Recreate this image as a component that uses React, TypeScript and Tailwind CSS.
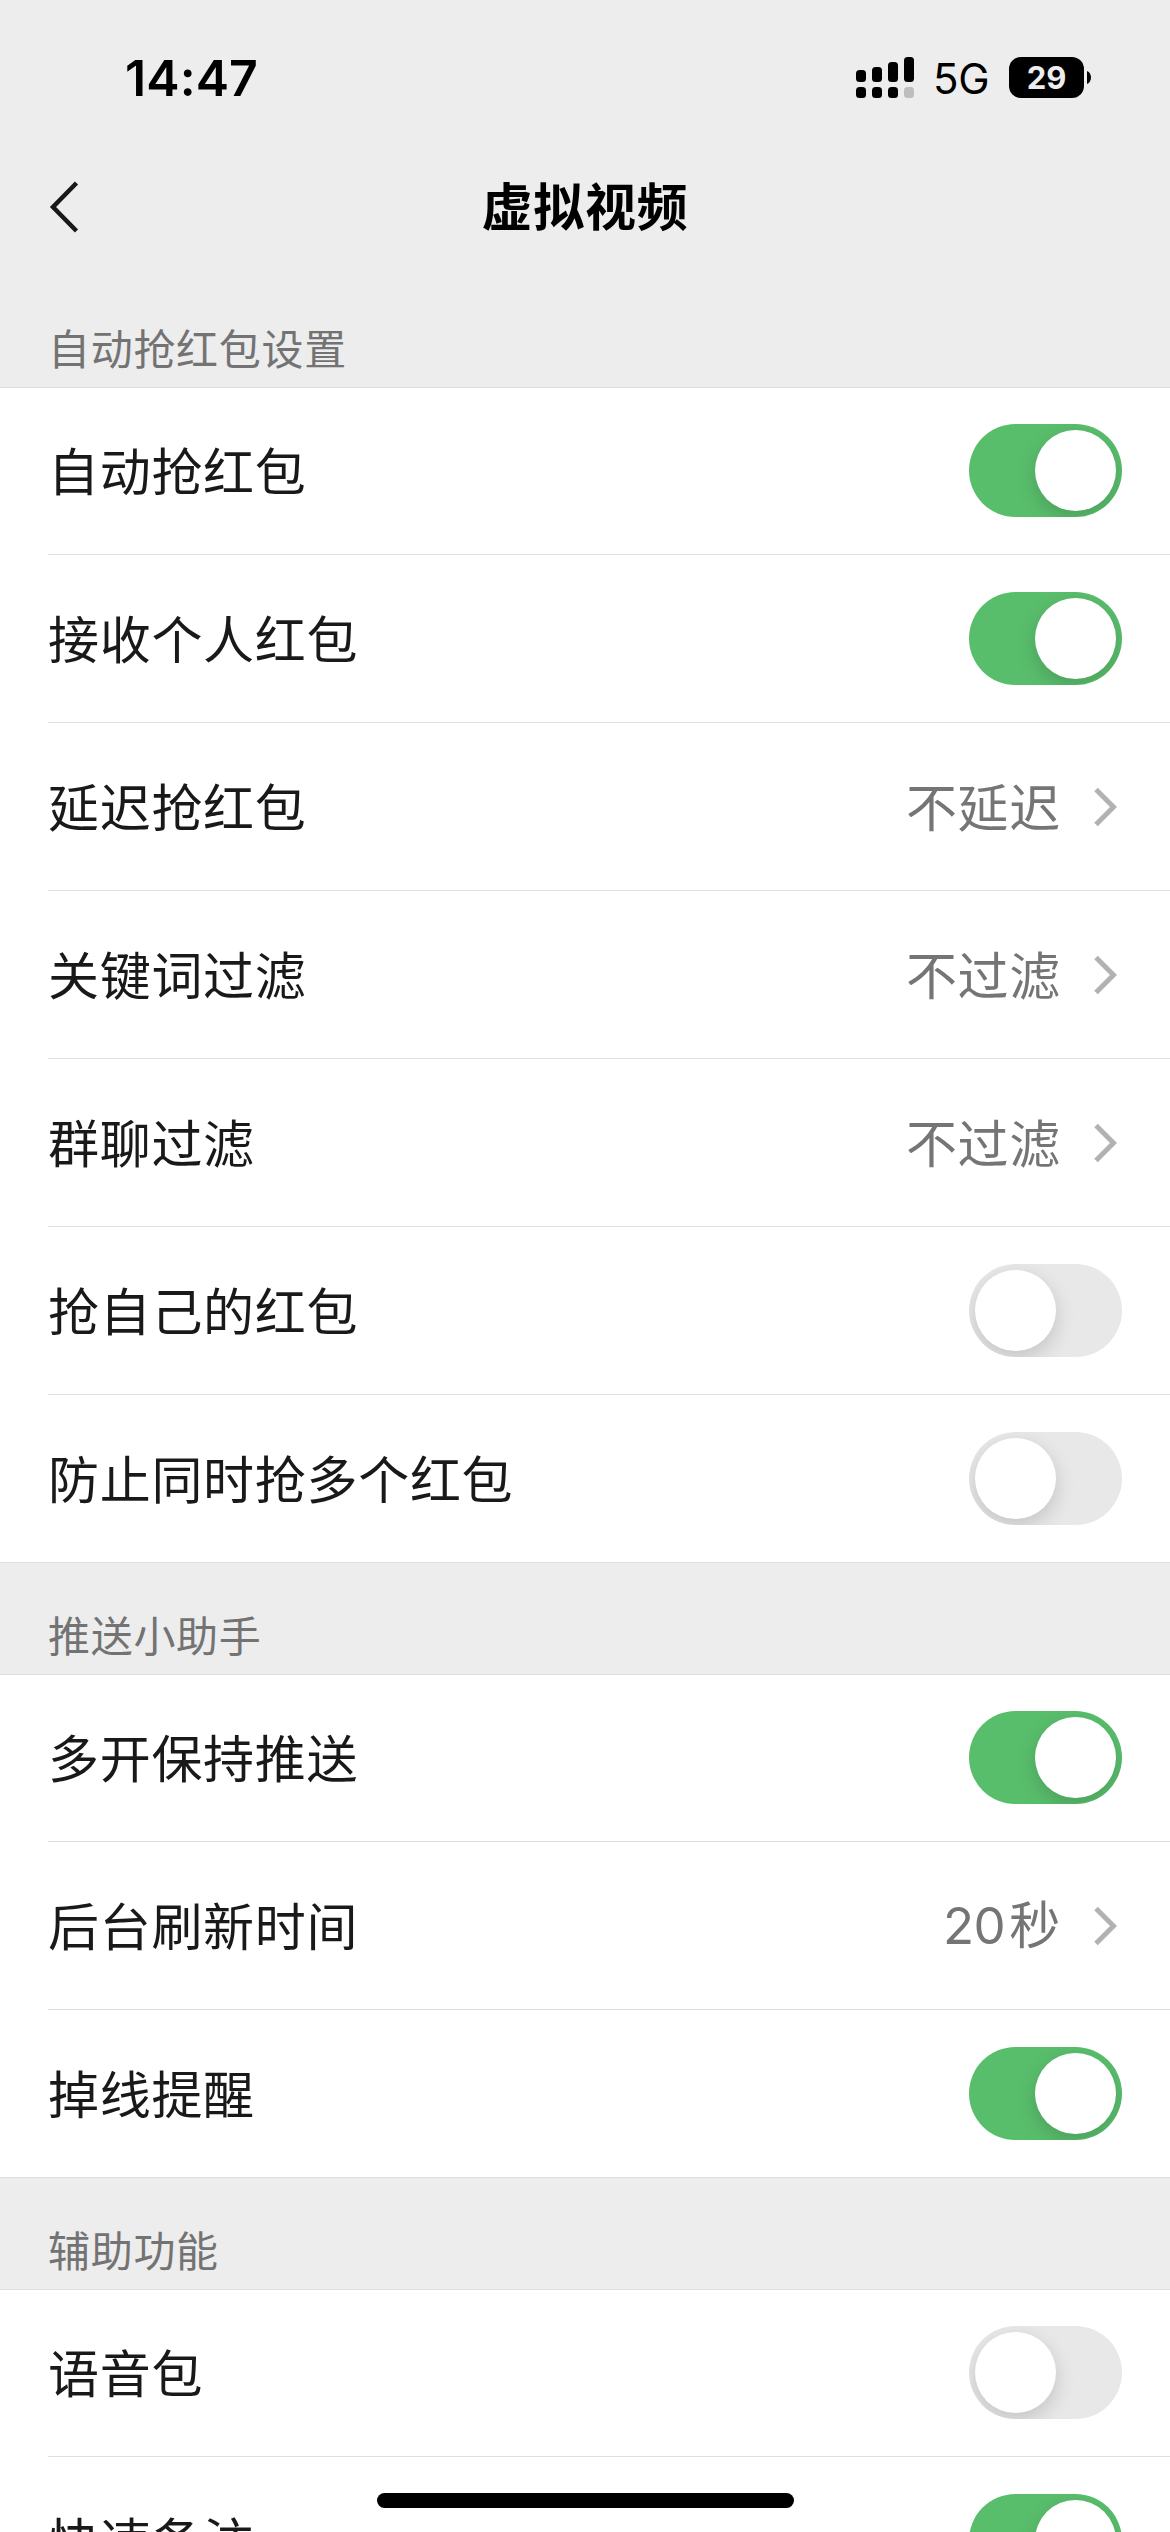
import clsx from "clsx";
import { useState } from "react";

type SettingItem = {
	label: string;
	amount?: number;
	value?: string;
	enabled?: boolean;
};

type SettingSection = {
	title: string;
	items: SettingItem[];
};

const SECTIONS: SettingSection[] = [
	{
		title: "自动抢红包设置",
		items: [
			{ label: "自动抢红包", enabled: true },
			{ label: "接收个人红包", enabled: true },
			{ label: "延迟抢红包", value: "不延迟" },
			{ label: "关键词过滤", value: "不过滤" },
			{ label: "群聊过滤", value: "不过滤" },
			{ label: "抢自己的红包", enabled: false },
			{ label: "防止同时抢多个红包", enabled: false },
		],
	},
	{
		title: "推送小助手",
		items: [
			{ label: "多开保持推送", enabled: true },
			{ label: "后台刷新时间", amount: 20, value: "秒" },
			{ label: "掉线提醒", enabled: true },
		],
	},
	{
		title: "辅助功能",
		items: [
			{ label: "语音包", enabled: false },
			{ label: "快速备注", enabled: true },
		],
	},
];

function SignalIcon() {
	return (
		<svg width="58" height="41" viewBox="0 0 58 41" fill="#000">
			<rect x="0" y="13" width="10" height="12" rx="3.5" />
			<rect x="16" y="10" width="10" height="15" rx="3.5" />
			<rect x="32" y="5" width="10" height="20" rx="3.5" />
			<rect x="48" y="0" width="10" height="25" rx="3.5" />
			<rect x="0" y="30" width="10" height="11" rx="3.5" />
			<rect x="16" y="30" width="10" height="11" rx="3.5" />
			<rect x="32" y="30" width="10" height="11" rx="3.5" />
			<rect x="48" y="30" width="10" height="11" rx="3.5" fill="#bdbdbd" />
		</svg>
	);
}

function StatusBar() {
	return (
		<div className="flex h-[155px] items-center justify-between pl-[125px] pr-[79px] font-['Inter',sans-serif] text-black">
			<span className="pt-[1px] text-[50px] font-semibold leading-none tracking-[0.1px]">
				14:47
			</span>
			<div className="flex items-center">
				<SignalIcon />
				<span className="ml-[19px] w-[55px] whitespace-nowrap pt-[2px] text-[42px] leading-none tracking-[-0.3px]">
					5G
				</span>
				<span className="ml-[21px] flex h-[41px] w-[75px] items-center justify-center rounded-[12px] bg-black text-[31px] font-bold leading-none text-[#ededed]">
					29
				</span>
				<svg className="ml-[3px]" width="4" height="13" viewBox="0 0 4 13">
					<path d="M0 0C2.6 1.2 4 3.6 4 6.5S2.6 11.8 0 13Z" fill="#000" />
				</svg>
			</div>
		</div>
	);
}

function NavBar() {
	return (
		<header className="grid h-[104px] grid-cols-[1fr_auto_1fr] items-center px-[48px]">
			<button type="button" aria-label="返回">
				<svg width="34" height="54" viewBox="0 0 34 54" fill="none">
					<path d="M28.5 3L5 27L28.5 51" stroke="#191919" strokeWidth="4.5" />
				</svg>
			</button>
			<h1 className="pb-[6px] text-[51px] font-bold leading-none tracking-[0.7px] text-black">
				虚拟视频
			</h1>
		</header>
	);
}

function Toggle({ defaultOn, label }: { defaultOn: boolean; label: string }) {
	const [on, setOn] = useState(defaultOn);

	return (
		<button
			type="button"
			role="switch"
			aria-checked={on}
			aria-label={label}
			onClick={() => setOn((current) => !current)}
			className={clsx(
				"flex h-[93px] w-[153px] items-center overflow-hidden rounded-full px-[6px]",
				on ? "justify-end bg-[#59be6c]" : "justify-start bg-[#e8e8e8]",
			)}
		>
			<span className="size-[81px] rounded-full bg-white shadow-[0_7px_20px_rgba(0,0,0,0.16)]" />
		</button>
	);
}

function SettingRow({ item, last }: { item: SettingItem; last: boolean }) {
	return (
		<div
			className={clsx(
				"ml-[48px] flex h-[168px] items-center justify-between border-b pr-[48px]",
				last ? "border-transparent" : "border-[#dfdfdf]",
			)}
		>
			<span className="pb-[3px] text-[51px] leading-none tracking-[0.7px] text-[#191919]">
				{item.label}
			</span>
			{item.value ? (
				<span className="flex items-center gap-[32px] pr-[5px]">
					<span className="flex items-baseline pb-[3px] text-[51px] leading-none tracking-[0.7px] text-[#757575]">
						{item.amount ? (
							<span className="mr-[4px] pt-[2px] font-['Inter',sans-serif] tracking-[-0.5px]">
								{item.amount}
							</span>
						) : null}
						{item.value}
					</span>
					<svg width="24" height="40" viewBox="0 0 24 40" fill="none">
						<path d="M3 2.5L20.5 20L3 37.5" stroke="#b2b2b2" strokeWidth="5" />
					</svg>
				</span>
			) : (
				<Toggle defaultOn={item.enabled ?? false} label={item.label} />
			)}
		</div>
	);
}

export default function App() {
	return (
		<div className="relative h-[2532px] w-[1170px] overflow-hidden bg-[#ededed] font-['Noto_Sans_CJK_SC',sans-serif]">
			<StatusBar />
			<NavBar />
			<main className="pt-[17px]">
				{SECTIONS.map((section) => (
					<section key={section.title}>
						<h2 className="flex h-[111px] items-end px-[48px] pb-[19px] text-[42px] leading-[42px] tracking-[0.7px] text-[#737373]">
							{section.title}
						</h2>
						<div className="bg-white shadow-[inset_0_1px_#dfdfdf,inset_0_-1px_#dfdfdf]">
							{section.items.map((item, index) => (
								<SettingRow
									key={item.label}
									item={item}
									last={index === section.items.length - 1}
								/>
							))}
						</div>
					</section>
				))}
			</main>
			<div className="absolute bottom-[24px] left-[377px] h-[15px] w-[417px] rounded-full bg-black" />
		</div>
	);
}
